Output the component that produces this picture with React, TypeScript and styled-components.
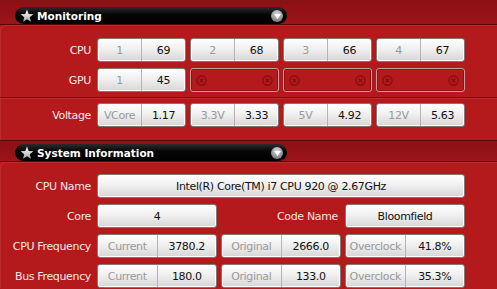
import React from 'react';
import styled, { createGlobalStyle } from 'styled-components';

const GlobalStyle = createGlobalStyle`
  html, body { margin: 0; padding: 0; }
  body {
    width: 497px;
    height: 289px;
    overflow: hidden;
    background: #b4191c;
    font-family: "DejaVu Sans", Tahoma, sans-serif;
  }
`;

type Pair = { label: string; value: string } | null;

const cpuTemps: Pair[] = [
  { label: '1', value: '69' },
  { label: '2', value: '68' },
  { label: '3', value: '66' },
  { label: '4', value: '67' },
];
const gpuTemps: Pair[] = [{ label: '1', value: '45' }, null, null, null];
const voltages: Pair[] = [
  { label: 'VCore', value: '1.17' },
  { label: '3.3V', value: '3.33' },
  { label: '5V', value: '4.92' },
  { label: '12V', value: '5.63' },
];
const cpuFreq: Pair[] = [
  { label: 'Current', value: '3780.2' },
  { label: 'Original', value: '2666.0' },
  { label: 'Overclock', value: '41.8%' },
];
const busFreq: Pair[] = [
  { label: 'Current', value: '180.0' },
  { label: 'Original', value: '133.0' },
  { label: 'Overclock', value: '35.3%' },
];

function Star() {
  return (
    <svg width="14" height="14" viewBox="0 0 24 24">
      <defs>
        <linearGradient id="starg" x1="0" y1="0" x2="0" y2="1">
          <stop offset="0" stopColor="#ffffff" />
          <stop offset="1" stopColor="#a9a9a9" />
        </linearGradient>
      </defs>
      <polygon
        points="12,1 14.9,8.6 23,9 16.7,14.1 18.8,22 12,17.6 5.2,22 7.3,14.1 1,9 9.1,8.6"
        fill="url(#starg)"
      />
    </svg>
  );
}

function XMark() {
  return (
    <svg width="11" height="11" viewBox="0 0 11 11">
      <circle cx="5.5" cy="5.5" r="4.6" fill="none" stroke="#7e0b0f" strokeWidth="1.1" />
      <path d="M3.6 3.6 L7.4 7.4 M7.4 3.6 L3.6 7.4" stroke="#7e0b0f" strokeWidth="1.1" />
    </svg>
  );
}

function SectionHeader({ title, first }: { title: string; first?: boolean }) {
  return (
    <HeaderBar $first={first}>
      <Pill>
        <Star />
        <Title>{title}</Title>
        <Toggle>
          <svg width="7" height="5" viewBox="0 0 7 5">
            <polygon points="0,0 7,0 3.5,5" fill="#fff" />
          </svg>
        </Toggle>
      </Pill>
    </HeaderBar>
  );
}

function Pairs({ items }: { items: Pair[] }) {
  return (
    <Grid $cols={items.length}>
      {items.map((p, i) =>
        p ? (
          <Box key={i}>
            <Cell $muted>{p.label}</Cell>
            <Cell>{p.value}</Cell>
          </Box>
        ) : (
          <DeadBox key={i}>
            <XMark />
            <XMark />
          </DeadBox>
        )
      )}
    </Grid>
  );
}

export default function App() {
  return (
    <>
      <GlobalStyle />
      <SectionHeader title="Monitoring" first />
      <Panel $top={13} $bottom={13}>
        <Row>
          <Label>CPU</Label>
          <Pairs items={cpuTemps} />
        </Row>
        <Row>
          <Label>GPU</Label>
          <Pairs items={gpuTemps} />
        </Row>
        <Divider />
        <Row>
          <Label>Voltage</Label>
          <Pairs items={voltages} />
        </Row>
      </Panel>
      <SectionHeader title="System Information" />
      <Panel $top={12} $bottom={0}>
        <Row>
          <Label>CPU Name</Label>
          <Grid $cols={3}>
            <Box $span>
              <Cell>Intel(R) Core(TM) i7 CPU 920 @ 2.67GHz</Cell>
            </Box>
          </Grid>
        </Row>
        <Row>
          <Label>Core</Label>
          <Grid $cols={3}>
            <Box>
              <Cell>4</Cell>
            </Box>
            <InlineLabel>Code Name</InlineLabel>
            <Box>
              <Cell>Bloomfield</Cell>
            </Box>
          </Grid>
        </Row>
        <Row>
          <Label>CPU Frequency</Label>
          <Pairs items={cpuFreq} />
        </Row>
        <Row>
          <Label>Bus Frequency</Label>
          <Pairs items={busFreq} />
        </Row>
      </Panel>
    </>
  );
}

const HeaderBar = styled.div<{ $first?: boolean }>`
  box-sizing: content-box;
  height: ${(p) => (p.$first ? 24 : 20)}px;
  border-top: ${(p) => (p.$first ? 'none' : '1px solid #5c070a')};
  border-bottom: 1px solid #5c070a;
  background: linear-gradient(#8c1015, #9c1419);
  display: flex;
  align-items: flex-end;
  padding-left: 15px;
`;

const Pill = styled.div`
  width: 272px;
  height: 17px;
  border-radius: 9px;
  background: linear-gradient(#2c2c2c, #050505 45%, #000);
  display: flex;
  align-items: center;
  gap: 3px;
  padding: 0 4px 0 5px;
  box-sizing: border-box;
`;

const Title = styled.span`
  color: #fff;
  font-family: "DejaVu Sans", Verdana, sans-serif;
  font-weight: bold;
  font-size: 10.5px;
  text-shadow: 0 1px 0 #000;
`;

const Toggle = styled.div`
  margin-left: auto;
  width: 12px;
  height: 12px;
  border-radius: 50%;
  background: radial-gradient(circle at 50% 30%, #d8d8d8, #7a7a7a 80%);
  display: flex;
  align-items: center;
  justify-content: center;
  padding-top: 1px;
  box-sizing: border-box;
`;

const Panel = styled.div<{ $top: number; $bottom: number }>`
  display: flex;
  flex-direction: column;
  gap: 6px;
  padding: ${(p) => p.$top}px 0 ${(p) => p.$bottom}px;
  background: #b4191c;
  border-top-left-radius: 5px;
  box-shadow: inset 1px 1px 0 rgba(255, 255, 255, 0.08);
`;

const Divider = styled.div`
  height: 1px;
  margin: -1px 0 -1px;
  background: #7e0d10;
  box-shadow: 0 1px 0 rgba(255, 255, 255, 0.08);
`;

const Row = styled.div`
  display: flex;
  align-items: center;
  height: 24px;
`;

const Label = styled.div`
  width: 91px;
  margin-right: 6px;
  text-align: right;
  color: #f6e8e8;
  font-size: 11px;
  letter-spacing: -0.35px;
  white-space: nowrap;
`;

const Grid = styled.div<{ $cols: number }>`
  width: 368px;
  height: 24px;
  display: grid;
  grid-template-columns: repeat(${(p) => p.$cols}, 1fr);
  gap: 4px;
`;

const Box = styled.div<{ $span?: boolean }>`
  grid-column: ${(p) => (p.$span ? '1 / -1' : 'auto')};
  display: flex;
  box-sizing: border-box;
  height: 24px;
  border: 1px solid #857676;
  border-radius: 3px;
  background: linear-gradient(#ffffff, #f0f0f0 45%, #d6d6d6);
  box-shadow: inset 0 0 0 1px #ffffff;
  overflow: hidden;
`;

const Cell = styled.div<{ $muted?: boolean }>`
  flex: 1;
  display: flex;
  align-items: center;
  justify-content: center;
  font-size: 11px;
  letter-spacing: -0.35px;
  white-space: nowrap;
  color: ${(p) => (p.$muted ? '#9a9a9a' : '#111')};
  & + & {
    border-left: 1px solid #b4b4b4;
  }
`;

const DeadBox = styled.div`
  display: flex;
  align-items: center;
  justify-content: space-between;
  box-sizing: border-box;
  height: 24px;
  padding: 0 5px;
  border: 1px solid #c29e9e;
  border-radius: 3px;
  box-shadow: inset 0 0 0 1px #8c1014;
`;

const InlineLabel = styled.div`
  display: flex;
  align-items: center;
  justify-content: flex-end;
  padding-right: 3px;
  color: #f6e0e0;
  font-size: 11px;
  letter-spacing: -0.35px;
`;
